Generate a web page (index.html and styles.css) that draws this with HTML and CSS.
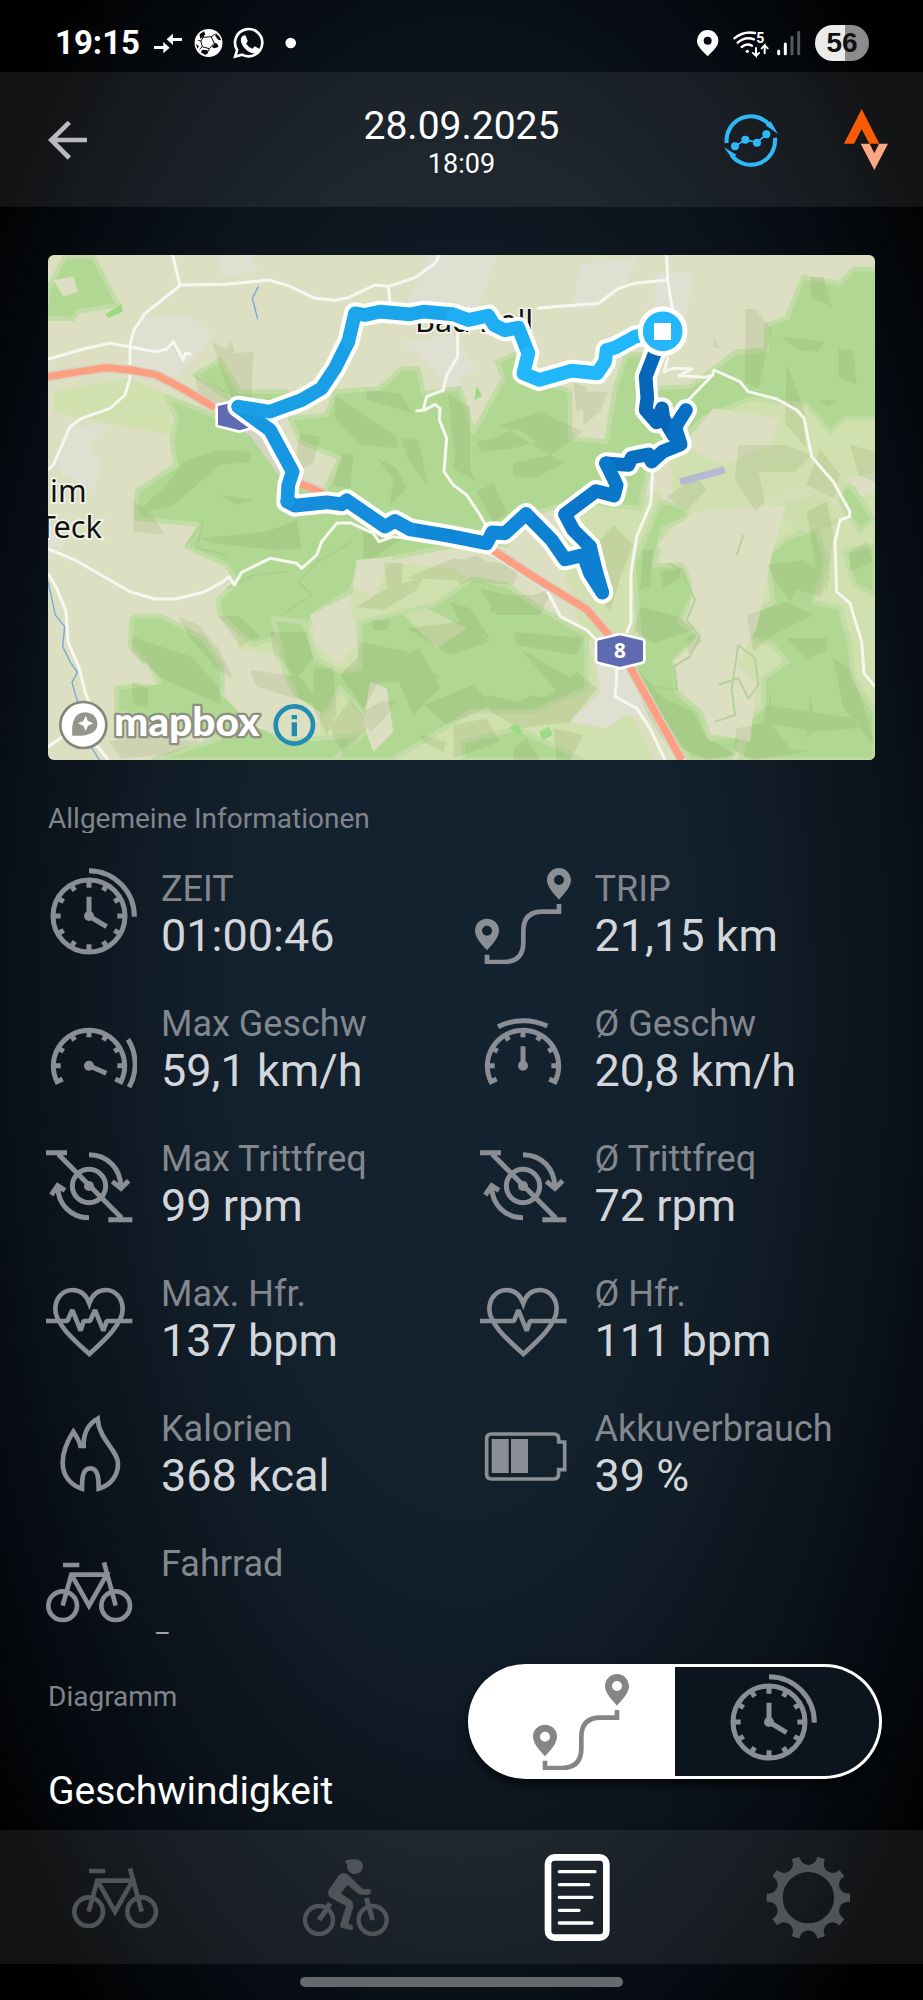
FILE: index.html
```html
<!DOCTYPE html>
<html lang="de">
<head>
<meta charset="utf-8">
<meta name="viewport" content="width=device-width, initial-scale=1">
<title>Tour 28.09.2025</title>
<link rel="stylesheet" href="styles.css">
</head>
<body>
<svg class="sprite" aria-hidden="true">
  <symbol id="i-clock" viewBox="33 235 288 288">
    <g fill="none" stroke="currentColor" stroke-width="15">
      <circle cx="177" cy="379" r="108"/>
      <path d="M177 243A137 137 0 0 1 313 381"/>
      <path d="M177 379V321M177 379L230 411"/>
      <path d="M177 270v24M177 488v-24M68 379h24M286 379h-24M123 285l11 18M231 285l-11 18M83 325l18 11M271 325l-18 11M83 433l18-11M271 433l-18-11M123 473l11-18M231 473l-11-18"/>
    </g>
    <circle cx="177" cy="379" r="15" fill="currentColor"/>
  </symbol>
  <symbol id="i-trip" viewBox="43 235 288 288">
    <path fill="currentColor" fill-rule="evenodd" d="M295 235a36 36 0 0 1 36 37c0 20-22 42-36 58c-14-16-36-38-36-58a36 36 0 0 1 36-37zm0 21a15 15 0 1 0 0 30a15 15 0 0 0 0-30zM79 387a36 36 0 0 1 36 37c0 20-22 42-36 58c-14-16-36-38-36-58a36 36 0 0 1 36-37zm0 21a15 15 0 1 0 0 30a15 15 0 0 0 0-30z"/>
    <path fill="none" stroke="currentColor" stroke-width="14" d="M79 495v22h50q59 0 59-59v-34q0-58 58-58h49v-23"/>
  </symbol>
  <symbol id="i-max" viewBox="33 639 288 288">
    <g fill="none" stroke="currentColor" stroke-width="15">
      <path d="M98 867l-17 8A107 107 0 1 1 273 875l-17-8"/>
      <path d="M177 718v24M68 827h24M286 827h-24M123 733l11 18M231 733l-11 18M83 773l18 11M271 773l-18 11"/>
      <path d="M177 827L229 850M294 748A140 140 0 0 1 297 892"/>
    </g>
    <circle cx="177" cy="827" r="15" fill="currentColor"/>
  </symbol>
  <symbol id="i-avg" viewBox="43 639 288 288">
    <g fill="none" stroke="currentColor" stroke-width="15">
      <path d="M108 867l-17 8A107 107 0 1 1 283 875l-17-8"/>
      <path d="M187 718v24M78 827h24M296 827h-24M133 733l11 18M241 733l-11 18M93 773l18 11M281 773l-18 11"/>
      <path d="M187 827V769M112 710A170 170 0 0 1 260 708"/>
    </g>
    <circle cx="187" cy="827" r="15" fill="currentColor"/>
  </symbol>
  <symbol id="i-crank" viewBox="33 83 288 288">
    <g fill="none" stroke="currentColor" stroke-width="15">
      <path d="M48 127h63M235 328h72M85 132L275 323"/>
      <circle cx="177" cy="227" r="50"/>
      <path d="M177 133C235 133 272 178 272 228M247 213l26 21l23-23"/>
      <path d="M177 322C120 322 84 278 84 232M64 254l19-28l22 14" />
    </g>
    <circle cx="177" cy="227" r="15" fill="currentColor"/>
  </symbol>
  <symbol id="i-heart-max" viewBox="33 487 288 288">
    <g fill="none" stroke="currentColor" stroke-width="14">
      <path d="M178 578C168 551 149 538 127 538C96 538 76 565 76 596C76 640 134 690 178 730C222 690 278 640 278 596C278 565 258 538 228 538C206 538 187 551 178 578z"/>
      <path stroke-linejoin="bevel" d="M48 631h64l15-33l25 62l9-29h19l15-33l25 62l10-29h77"/>
    </g>
  </symbol>
  <symbol id="i-heart" viewBox="43 487 288 288">
    <g fill="none" stroke="currentColor" stroke-width="14">
      <path d="M188 578C178 551 159 538 137 538C106 538 86 565 86 596C86 640 144 690 188 730C232 690 288 640 288 596C288 565 268 538 238 538C216 538 197 551 188 578z"/>
      <path stroke-linejoin="bevel" d="M58 631h102l13-33l25 62l10-29h110"/>
    </g>
  </symbol>
  <symbol id="i-flame" viewBox="33 891 288 288">
    <path fill="none" stroke="currentColor" stroke-width="14" d="M130 962C112 990 98 1018 98 1055C98 1096 124 1124 156 1133C156 1100 158 1072 181 1072C204 1072 206 1100 206 1133C240 1124 264 1096 264 1058C264 1018 206 985 203 923C176 938 160 964 161 1005H151C148 988 138 974 130 962z"/>
  </symbol>
  <symbol id="i-battery" viewBox="43 891 288 288">
    <path fill="none" stroke="currentColor" stroke-width="11" d="M92 969H280q14 0 14 14v10h18v83h-18v11q0 17-14 17H92q-14 0-14-14V983q0-14 14-14z"/>
    <path fill="currentColor" d="M93 984h51v102H93zM151 984h51v102h-51z"/>
  </symbol>
  <symbol id="i-bike" viewBox="123 124 288 288">
    <g fill="none" stroke="currentColor" stroke-width="14">
      <circle cx="188" cy="312" r="43"/><circle cx="347" cy="312" r="43"/>
      <path d="M188 312L214 219H320L267 312L216 222M312 182L347 312M189 190h49"/>
    </g>
  </symbol>
  <symbol id="i-rider" viewBox="894 1043 288 288">
    <g fill="none" stroke="currentColor" stroke-width="13">
      <circle cx="957" cy="1256" r="42"/><circle cx="1118" cy="1256" r="42"/>
      <path stroke-width="15" d="M957 1256L980 1224L990 1206M1118 1256L1099 1190"/>
    </g>
    <path fill="currentColor" d="M1035 1078C1060 1070 1089 1072 1089 1094A24 24 0 0 1 1044 1105C1040 1094 1043 1090 1035 1078zM1018 1120Q1032 1110 1045 1121L1088 1163H1106Q1113 1164 1113 1171T1106 1180H1082Q1074 1178 1068 1172L1043 1151L1022 1176L1053 1197Q1062 1206 1059 1219L1045 1267L1057 1272Q1061 1277 1058 1287L1026 1280Q1019 1278 1021 1269L1038 1214L992 1189Q980 1181 986 1166z"/>
  </symbol>
  <symbol id="i-doc" viewBox="202 624 288 288">
    <rect x="259" y="649" width="175" height="241" rx="20" fill="none" stroke="currentColor" stroke-width="20"/>
    <path fill="none" stroke="currentColor" stroke-width="10" stroke-linecap="round" d="M293 692H400M293 731H381M293 769H391M293 808H352M293 846H391"/>
  </symbol>
  <symbol id="i-gear" viewBox="889 624 288 288">
    <mask id="gear-notches">
      <circle cx="1034" cy="770" r="126" fill="#fff"/>
      <circle cx="1034" cy="770" r="77" fill="#000"/>
      <g fill="#000">
        <circle cx="1153" cy="809" r="27"/><circle cx="1107" cy="871" r="27"/><circle cx="1034" cy="895" r="27"/><circle cx="961" cy="871" r="27"/><circle cx="915" cy="809" r="27"/>
        <circle cx="915" cy="731" r="27"/><circle cx="961" cy="669" r="27"/><circle cx="1034" cy="645" r="27"/><circle cx="1107" cy="669" r="27"/><circle cx="1153" cy="731" r="27"/>
      </g>
    </mask>
    <circle cx="1034" cy="770" r="126" fill="currentColor" mask="url(#gear-notches)"/>
  </symbol>
</svg>

<div class="status">
  <div class="status-side">
    <span class="status-time">19:15</span>
    <svg class="status-left" viewBox="462 75 427 108" aria-hidden="true">
      <path fill="#fff" d="M462 138h28v-12l19 17l-19 17v-13h-28zM546 114h-27v-13l-19 17l19 17v-12h27z"/>
      <circle cx="626" cy="129" r="42" fill="#fff"/>
      <g fill="none" stroke="#05080c" stroke-width="3">
        <path d="M610 112l24-2l9 20l-15 16l-21-6l-4-17zM634 110l12-8M643 130l8 2M628 146l-2 8M607 140l-8 8M603 123l-8-2M610 112l2-12"/>
      </g>
      <path fill="#05080c" d="M599 103l13-9l4 8l-5 9l-10 5zM648 100l11 10l5 11l-9-2l-9-11zM645 131l8 2l3 8l-13 4l-7-4zM607 149l16 2l2 8l-9 6l-13-8zM588 133l9 5l-4 8z"/>
      <path fill="none" stroke="#fff" stroke-width="8" d="M706 170l6-20A41 41 0 1 1 727 164z"/>
      <path fill="#fff" d="M729 107l8-1l7 17l-5 8q8 12 19 15l7-7l16 9q0 10-14 13c-24 0-44-25-44-42q1-9 6-12z"/>
      <circle cx="873" cy="129" r="16" fill="#fff"/>
    </svg>
  </div>
  <div class="status-side">
    <svg class="status-right" viewBox="714 75 312 108" aria-hidden="true">
      <path fill="#fff" fill-rule="evenodd" d="M746 90a32 32 0 0 1 32 33c0 17-19 32-32 46c-13-14-32-29-32-46a32 32 0 0 1 32-33zm0 20a12 12 0 1 0 0 24a12 12 0 0 0 0-24z"/>
      <g fill="none" stroke="#fff" stroke-width="7" stroke-linecap="round">
        <path d="M826 115Q853 92 888 99M836 128Q859 108 885 118M848 141Q863 128 879 137"/>
        <path stroke-width="6" d="M891 144v23l-9-8M891 167l9-8M917 160v-24l-9 9M917 136l9 9"/>
      </g>
      <circle cx="865" cy="154" r="5" fill="#fff"/>
      <text x="892" y="128" class="wifi-gen">5</text>
      <g stroke-width="9" stroke-linecap="round">
        <path stroke="#fff" d="M959 153v8M979 132v29"/>
        <path stroke="#55585c" d="M999 112v49M1019 97v64"/>
      </g>
    </svg>
    <span class="status-battery">56</span>
  </div>
</div>

<header class="topbar">
  <button class="icon-btn" type="button" aria-label="Zurück">
    <svg class="ic-back" viewBox="144 360 120 120" aria-hidden="true"><path fill="none" stroke="#b8babd" stroke-width="14" d="M261 420H156M208 367L154 420L208 474"/></svg>
  </button>
  <div class="topbar-title">
    <h1>28.09.2025</h1>
    <p>18:09</p>
  </div>
  <div class="topbar-actions">
    <button class="icon-btn" type="button" aria-label="Synchronisieren">
      <svg class="ic-sync" viewBox="786 337 162 162" aria-hidden="true">
        <g fill="none" stroke="#2fb9f8" stroke-width="12">
          <path d="M794 427A73 73 0 0 1 925 376M939 411A73 73 0 0 1 808 463"/>
          <path stroke-width="5" d="M819 437L850 417L885 426L913 401"/>
        </g>
        <g fill="#2fb9f8"><path d="M948 400L911 374L926 362zM786 440L823 462L812 476z"/>
        <circle cx="819" cy="437" r="12"/><circle cx="850" cy="417" r="12"/><circle cx="885" cy="426" r="12"/><circle cx="913" cy="401" r="12"/></g>
      </svg>
    </button>
    <button class="icon-btn" type="button" aria-label="Strava">
      <svg class="ic-strava" viewBox="1148 330 132 183" aria-hidden="true">
        <path fill="#fc5b04" d="M1201 330L1254 434H1224L1201 390L1178 434H1148z"/>
        <path fill="#fca785" d="M1198 434H1225L1239 463L1253 434H1280L1239 513z"/>
      </svg>
    </button>
  </div>
</header>

<main class="content">
  <svg class="map" viewBox="24 30 2481 1515" role="img" aria-label="Karte der Route">
    <rect x="24" y="30" width="2481" height="1515" fill="#dcdfc1"/>
    <g fill="#dfe0d2">
      <path d="M528 30h105l22 50l-105 15zM1170 30h200l-70 200l-150 10l-45-75zM300 215l140-5l80 65l-55 60l-60 60l-130-30zM1620 60l170-20l-30 80l-90 70l-70 10zM1850 80l110 5l-30 160l-90-20zM1090 290l150-20l80 130l-60 50zM90 545l110-5l-60 70l45 45l-25 80l-110-60zM24 860l60 30l-60 60z"/>
    </g>
    <g fill="#d0e0af">
      <path d="M40 440l230-40l110 50l20 120l-170-30l-190-40zM1880 440l250-60l390 40v260l-300 60l-160 60l-160-40zM1560 800l300-60l40 120l-60 120l-40 200l-60 100l-120-120zM560 880l340 60l340 30l280 180l180 100l140 295H900l-300-300zM2080 880l430-140v800h-420l-40-200z"/>
    </g>
    <g fill="#b1d893" stroke="#c2dca5" stroke-width="14" stroke-linejoin="round">
      <path d="M10 220L30 120L75 36H160L235 180L110 200L100 222z"/>
      <path d="M380 455L520 510L640 560L735 680L850 745L900 640L780 590L750 520L860 510L885 440L1020 430L1085 370H1135L1150 445L1260 430L1300 560L1325 520L1390 400L1370 350L1440 320L1490 400L1590 440V580L1700 590L1725 430L1760 325L1810 330L1820 430L1950 425L2090 320L2180 315V240L2240 220L2290 96L2400 115L2440 72H2520V520L2420 520L2370 560L2300 480L2130 460L1990 520L1910 600L1830 650L1800 790L1600 770L1500 800L1400 900L1300 890L1100 930L960 960L930 1040L830 1100L800 1150L640 1200L540 1110L535 1065L590 1010L560 960L440 905L480 840L290 820V740L410 660L395 590L410 520z"/>
      <path d="M465 390L540 345L600 440L740 440L700 500L580 470z"/>
      <path d="M275 1120L295 1113H365L490 1180L545 1260L550 1350L660 1430L730 1490L840 1480L1090 1460L1050 1545H340L540 1480L230 1400V1330L360 1310L270 1200z"/>
      <path d="M700 1120L790 1130L830 1240L900 1280L960 1270L960 1130L1180 1080L1300 1000L1400 1020L1500 1090L1640 1170V1330L1480 1400L1290 1400L1150 1490L1050 1545H880L1000 1440L900 1330L860 1400L800 1430L740 1290z"/>
      <path d="M1860 770L1990 795L1870 850L1840 960L1930 960L1960 1050L1920 1130L1980 1170L1900 1250L1910 1340L1980 1400L2010 1480L2110 1470L2070 1545H1950L1850 1400L1790 1290L1750 1270L1800 1170L1780 960z"/>
      <path d="M2000 910L2090 835L2115 895L2010 930z"/>
      <path d="M2180 930L2240 880L2330 850L2360 950L2320 1070L2400 1090L2430 1200L2440 1300L2505 1400V1545H2100L2130 1420L2170 1380V1300L2240 1250L2200 1200L2110 1170L2110 1120L2200 1070z"/>
      <path d="M2410 920l95-20v150l-60-30zM2200 790l150-40l40 80l-110 30zM2380 700l60 30l60 90l-40 40l-50-70zM1270 1490l160-40l200 95h-360z"/>
    </g>
    <g fill="#d1dfb1" opacity=".8">
      <path d="M1900 750l230-150l180 20l110 190l-120 50l-210-60l-110 60zM1560 960l90-10l60 160l-90-20zM2060 1230l40-30l40 90l30 100l-70 20zM1090 1110l70-20l120 60l-90 60zM2380 600l80 50l-60 110l-70-40z"/>
    </g>
    <g fill="#dcdfc1">
      <path d="M40 105l60-10l15 45l-45 15zM1600 415l80 10l30 60l-60 60l-40-20zM1310 490l-60-90l80-30zM1930 600l90-110l200 30l-30 80l-140 60zM1850 900l110-100l280-20l-40 130l-50 240l-60 110l60 60l-20 170l-90-20l-40-100l-70-60l-30-60l70-70l-20-80l10-120zM810 1110l120-60l20 150l-50 60l-70-60zM990 1310l50 20l20 130l-60 60l-30-80zM240 1310l80-60l30 70zM950 945l110-10l-60 120l-60-30zM590 1210l110 20l60 120l80 50v60l-100 20l-110-40l-80-90z"/>
    </g>
    <path fill="#dfe0d2" d="M1665 1230h75l40 60l70 110l-90 10l-60 40l-110-20l90-90z"/>
    <g fill="#6c8443" opacity=".13">
      <path d="M515 290l40 20l20-20l10 35l55-5l-10 230l-60-100zM465 390l80 40l60 70l-130-50zM540 615l90 5v30l-90 10l-140 120l-120 30l100-90l50-70zM490 640l35 10l-35 12zM540 750l100 15l-50 15zM885 450l100 70l80 50l10 40l-110-10l-80-80zM980 435l100 10l40 60l-140-40zM1085 580l50 5l30 140l-60-80zM780 565l60 10l-20 80l-60 30zM905 625l35 5l-10 100l-50-10zM1010 640l60 30l30 60l-50 50l10-80z"/>
      <path d="M480 880l200-20l90-35l15 85l-80 5l-180-20zM280 765l60 50l35 55l-95-10zM275 1175l180 60l80 90l10 55l-180-80l-90-80zM415 1115l60 25l60 70l45 90l-40-20l-90-100zM535 1113h60l65 60l-60 30zM690 1160h110l20 80l-50 60l-70-80zM630 1275l150 20l70 90l-200-60zM820 1270h60l10 140l-30 60l-40-80zM960 1190l140 30l100 80l-260 20zM950 1085l80-50l120-40l-20 40l-100 60zM1030 950l60 5l-10 100l-35-5z"/>
      <path d="M275 1310l50 20v60l-45-10zM205 1490l100-20l170 20l-90 40l-140 10zM995 1125h55l-10 30h-40zM970 1400l50-30l50-5l-40 60l-40 35zM1140 1470l80 20l-10 30l-60-30zM970 860l60-10l60 30l-90 60h-30zM1100 1000l140-60l200 20l-20 60l-200-15z"/>
      <path d="M1225 450l65 35v200l-50-80zM1250 600l60 110l-70-40zM1360 580l-50 10l10 30l100-10l70-20l-60-40zM1420 655l110-25l40 25l-80 40l-70 0zM1600 415l40 10v65l-30 10zM1630 440h75l-25 60l-50 40zM1380 540l120-40l130 60l-100 70zM1310 740l50-25l40 90l-40 30z"/>
      <path d="M2115 192h30l50 60l-40 180l-40-20zM2310 96h40l25 90l-60-30zM2225 275l130 15l-20 30l-60-5zM2395 312l45 5l10 100l-55-20zM2240 355l55 150v100l-60-70zM2020 275l20 35l-20-5zM2335 465h60l-30 20zM2095 600h140l80 30l-50 50l-110 0l20 90l-30 30l-60-100zM2430 600l75 20v90l-50-20zM2340 610l60 80l-20 70l-80-40z"/>
      <path d="M1230 960l80-30l60 40l-110 50zM1320 1030l80 20h80l60-20l-40 80l-130 0zM1350 1070l110 10l-40 30l-70-10zM1230 1070l60 20l60 90l-80-30zM1420 1160l210 20l-20 50l-180-30zM1440 1210l170 100l-60 30zM1340 1350l100 20l90-20l80-70l60 50l-80 100l-150 20l-90-50zM1420 1375l60-25l80 30l-60 30zM1240 1440l100-20l40 70l-140 50zM1420 1510l40-30l40 65h-80zM1540 1450l90 20l-40 75h-40zM1660 910l60-70l60 60l-40 100l-30 100l-60-90z"/>
      <path d="M1800 1085l120 30l40 40l-120 40l-60-40zM1810 915h30l-10 110l-30 10zM1860 980l60-10v30l-50 30zM1790 1270l80 90l90 40l40 80l90 50l-90 15l-130-60l-60-100zM2120 1110l120-40l80 40l-120 60l-60 50zM2180 960l110-15l80 50l-30 60l-130-40zM2210 1010l60 20l-20 40zM2300 1010h60l-20 50zM2180 1380l120 20l150 20v30l-130 10l-150-30zM2090 1450l100-20l60 80l50 10l-160 25l-60-30zM2380 1240l50 30l60 170l10 60l-90-110zM2300 800l60-30l20 100l-20 170l-30-60zM2430 920l50-30l20 60l-70 30z"/>
      <path d="M1880 755l90-60l30 40l-60 60zM2310 1350l20 100l-30 30zM2240 1180h120v40l-60 20zM1940 1180l30-20l15 30l-40 40zM1100 1150l160-20l90 60l-120 40zM1050 1250l90-40l60 120l-80 80zM1150 1380l150-60l60 60l-140 60zM900 1290l60-60l50 90l-40 70zM870 1450l60-90l60 80l-80 90z"/>
    </g>
    <g fill="#9ddb83"><path d="M195 208L245 178L248 200L205 219zM1303 465l7-42l16 30zM1407 1450l30 20l10 -10l-20 -25zM1497 1460l30-15l12 25l-30 15z"/></g>
    <g fill="none" stroke="#a6ca8c" stroke-width="6" opacity=".7">
      <path d="M560 1030l80-40l100-10M725 1110l90-60l-40-40l60-60l100-60M2110 870l-20 60M1885 955l40 20l40 90l-25 60l40 50l-30 60l-50 30l10 70l-70-10M2095 1200l50 40l10 80l-30 40l-30-60l-60 20M2095 1200l-20 130l10 80l-60 20M2190 1350v60l60-20M440 900l50-70l-20 80l90 20"/>
    </g>
    <path d="M1920 711L2054 674" stroke="#b5b9d2" stroke-width="22"/>
    <g fill="none" stroke="#7ba4dc" stroke-width="4"><path d="M655 125l-18 35l16 62M24 1010l22 100l28 35l-6 60l22 45l22 32l-16 30l20 70M150 1500l28 45"/></g>
    <g fill="none" stroke="#f7f7f1" stroke-width="9" stroke-linejoin="round">
      <path d="M398 30L420 122L385 150L315 205L282 255L270 300V400L255 450L210 490L125 520L90 545L40 660L24 675"/>
      <path d="M420 120L560 118L685 105L745 122L825 160L885 166L925 158L1005 120L1045 124L1125 98L1185 55L1198 30M1045 124L1050 175"/>
      <path d="M24 342L130 312L208 295L270 305L345 320L380 312L400 290L430 345L436 325L454 328"/>
      <path d="M24 912L105 945L270 1040L345 1062H405L490 1042L550 1010L567 995L583 1020L605 982L690 940L770 955L785 970L830 930L845 890L890 835L930 833L1000 865L1017 890L1060 875L1150 885L1230 880L1360 930L1520 1035L1562 1115L1640 1155L1680 1195L1728 1240L1730 1300L1725 1355L1790 1390L1830 1450L1875 1545"/>
      <path d="M24 985L50 1030L78 1100L84 1190L118 1270L135 1340L150 1380L120 1440L24 1505M120 1440L205 1545"/>
      <path d="M1253 260V335L1220 390L1210 435L1160 455L1150 495L1130 498L1155 495L1185 478L1200 490L1198 525L1220 580L1212 680L1240 720L1280 750L1320 810L1345 855"/>
      <path d="M1880 30L1883 105L1900 210M1883 105L1785 115L1735 130L1675 175L1490 190M1885 335L1872 380L1900 370L1955 372L1918 392L1995 397L2018 390L2022 375L2100 410L2125 440L2210 462L2270 495L2292 520L2315 635L2380 710L2430 800L2428 815L2400 825L2385 890L2390 1040L2430 1075L2465 1190L2472 1285L2505 1325"/>
      <path d="M2018 390L1945 465M1838 680L1832 775L1790 875L1773 985V1130L1760 1165"/>
    </g>
    <g fill="none" stroke-linejoin="round">
      <path stroke="#d5d3c4" stroke-width="30" d="M24 395L130 378L200 368L280 376L350 390L430 432L525 488L640 560L730 685L850 745M1340 900L1480 995L1640 1093L1740 1210L1800 1320L1925 1545"/>
      <path stroke="#ff9f82" stroke-width="22" d="M24 395L130 378L200 368L280 376L350 390L430 432L525 488M780 715L850 745M1350 910L1480 995L1640 1093L1740 1210L1800 1320L1925 1545"/>
    </g>
    <g class="map-label">
      <text x="30" y="770">im</text>
      <text x="-4" y="880">Teck</text>
      <text x="1125" y="262">Bad Boll</text>
    </g>
    <g fill="#5f6ab1" stroke="#fff" stroke-width="8" stroke-linejoin="round">
      <path d="M530 480L598 464L668 480V540L598 560L530 543z"/>
      <path d="M1668 1190Q1668 1184 1676 1182L1740 1167L1805 1182Q1813 1184 1813 1190V1245Q1813 1252 1805 1254L1740 1270L1676 1254Q1668 1252 1668 1245z"/>
    </g>
    <text class="shield" x="1740" y="1240">8</text>
    <g fill="none" stroke-linejoin="round" stroke-linecap="round">
      <path stroke="#fff" stroke-width="66" d="M1868 259L1846 320L1817 395L1822 460L1817 495L1850 532L1866 490L1870 520L1900 570L1910 540L1938 495L1905 545L1922 598L1868 620L1835 650L1825 628L1775 638L1765 660L1698 655L1730 720L1722 752L1668 738L1575 808L1600 855L1650 905L1670 985L1687 1043L1650 985L1630 930L1575 943L1535 885L1458 807L1395 865L1357 862L1340 895L1230 873L1110 853L1065 828L1035 845L920 766L905 778L860 772L765 782L742 770L745 720L758 680L690 555L595 485L690 500L785 465L845 430L885 370L925 290L945 205L975 210L1020 200L1110 208L1150 200L1240 208L1285 225L1345 212L1362 240L1395 256L1435 248L1465 325L1450 385L1498 405L1595 377L1672 385L1695 350L1700 315L1725 308L1785 275L1868 259"/>
      <g stroke-width="41">
        <path stroke="#0666b9" d="M1868 259L1846 320L1817 395L1822 460L1817 495L1850 532L1866 490L1870 520L1900 570"/>
        <path stroke="#0870c3" d="M1900 570L1910 540L1938 495L1905 545L1922 598L1868 620L1835 650L1825 628L1775 638L1765 660L1698 655"/>
        <path stroke="#0b77ca" d="M1698 655L1730 720L1722 752L1668 738L1575 808L1600 855L1650 905"/>
        <path stroke="#0d80d1" d="M1650 905L1670 985L1687 1043L1650 985L1630 930L1575 943L1535 885L1458 807"/>
        <path stroke="#1087d8" d="M1458 807L1395 865L1357 862L1340 895L1230 873L1110 853"/>
        <path stroke="#148edc" d="M1110 853L1065 828L1035 845L920 766L905 778L860 772L765 782L742 770"/>
        <path stroke="#1797e1" d="M742 770L745 720L758 680L690 555L595 485"/>
        <path stroke="#1a9fe7" d="M595 485L690 500L785 465L845 430L885 370L925 290"/>
        <path stroke="#1ba6ec" d="M925 290L945 205L975 210L1020 200L1110 208L1150 200L1240 208"/>
        <path stroke="#1eaef3" d="M1240 208L1285 225L1345 212L1362 240L1395 256L1435 248L1465 325"/>
        <path stroke="#22b7fa" d="M1465 325L1450 385L1498 405L1595 377L1672 385L1695 350L1700 315L1725 308L1785 275L1868 259"/>
      </g>
    </g>
    <circle cx="1868" cy="259" r="67" fill="#25b7fb" stroke="#fff" stroke-width="15"/>
    <rect x="1842" y="234" width="51" height="51" fill="#fff"/>
    <circle cx="130" cy="1440" r="69" fill="#fff" stroke="#85877a" stroke-width="8"/>
    <path fill="#94968d" d="M97 1472C93 1430 105 1402 135 1402C158 1402 172 1418 172 1437C172 1466 140 1475 97 1472z"/>
    <path fill="#fff" d="M137 1412l7 16l16 7l-16 7l-7 16l-7-16l-16-7l16-7z"/>
    <text class="mapbox" x="222" y="1473">mapbox</text>
    <circle cx="763" cy="1440" r="56" fill="none" stroke="#228cb2" stroke-width="14"/>
    <path fill="#228cb2" d="M755 1410h16v13h-16zM755 1432h16v42h-16z"/>
  </svg>

  <h2 class="section-title">Allgemeine Informationen</h2>
  <dl class="stats">
    <div class="stat"><svg class="icon" aria-hidden="true"><use href="#i-clock"/></svg><div class="stat-text"><dt>ZEIT</dt><dd>01:00:46</dd></div></div>
    <div class="stat"><svg class="icon" aria-hidden="true"><use href="#i-trip"/></svg><div class="stat-text"><dt>TRIP</dt><dd>21,15 km</dd></div></div>
    <div class="stat"><svg class="icon" aria-hidden="true"><use href="#i-max"/></svg><div class="stat-text"><dt>Max Geschw</dt><dd>59,1 km/h</dd></div></div>
    <div class="stat"><svg class="icon" aria-hidden="true"><use href="#i-avg"/></svg><div class="stat-text"><dt>Ø Geschw</dt><dd>20,8 km/h</dd></div></div>
    <div class="stat"><svg class="icon" aria-hidden="true"><use href="#i-crank"/></svg><div class="stat-text"><dt>Max Trittfreq</dt><dd>99 rpm</dd></div></div>
    <div class="stat"><svg class="icon" aria-hidden="true"><use href="#i-crank"/></svg><div class="stat-text"><dt>Ø Trittfreq</dt><dd>72 rpm</dd></div></div>
    <div class="stat"><svg class="icon" aria-hidden="true"><use href="#i-heart-max"/></svg><div class="stat-text"><dt>Max. Hfr.</dt><dd>137 bpm</dd></div></div>
    <div class="stat"><svg class="icon" aria-hidden="true"><use href="#i-heart"/></svg><div class="stat-text"><dt>Ø Hfr.</dt><dd>111 bpm</dd></div></div>
    <div class="stat"><svg class="icon" aria-hidden="true"><use href="#i-flame"/></svg><div class="stat-text"><dt>Kalorien</dt><dd>368 kcal</dd></div></div>
    <div class="stat"><svg class="icon" aria-hidden="true"><use href="#i-battery"/></svg><div class="stat-text"><dt>Akkuverbrauch</dt><dd>39 %</dd></div></div>
    <div class="stat"><svg class="icon" aria-hidden="true"><use href="#i-bike"/></svg><div class="stat-text"><dt>Fahrrad</dt><dd class="stat-note">_</dd></div></div>
  </dl>

  <section class="chart-head">
    <div class="chart-titles">
      <h2 class="section-title">Diagramm</h2>
      <h3 class="chart-name">Geschwindigkeit</h3>
    </div>
    <div class="toggle" role="group" aria-label="Achse">
      <button class="toggle-btn is-on" type="button" aria-pressed="true" aria-label="Strecke"><svg class="icon" aria-hidden="true"><use href="#i-trip"/></svg></button>
      <button class="toggle-btn" type="button" aria-pressed="false" aria-label="Zeit"><svg class="icon" aria-hidden="true"><use href="#i-clock"/></svg></button>
    </div>
  </section>
</main>

<nav class="tabs" aria-label="Hauptnavigation">
  <a class="tab" href="#bike" aria-label="Fahrrad"><svg class="icon" aria-hidden="true"><use href="#i-bike"/></svg></a>
  <a class="tab" href="#ride" aria-label="Fahren"><svg class="icon" aria-hidden="true"><use href="#i-rider"/></svg></a>
  <a class="tab is-active" href="#log" aria-label="Touren" aria-current="page"><svg class="icon" aria-hidden="true"><use href="#i-doc"/></svg></a>
  <a class="tab" href="#settings" aria-label="Einstellungen"><svg class="icon" aria-hidden="true"><use href="#i-gear"/></svg></a>
</nav>
<div class="home"><span class="home-bar"></span></div>
</body>
</html>
```

FILE: styles.css
```css
* { box-sizing: border-box; }

body {
  margin: 0;
  min-height: 100vh;
  display: flex;
  flex-direction: column;
  font-family: Roboto, "Liberation Sans", sans-serif;
  color: #fff;
  background: #000 radial-gradient(ellipse 66% 66% at 50% 50%, #142330 0%, #13212d 38%, #0d161f 64%, #070c12 82%, #000 100%);
}

h1, h2, h3, p, dl, dd { margin: 0; font-weight: 400; }
button { padding: 0; border: 0; background: none; color: inherit; cursor: pointer; }
svg { display: block; }
.sprite { position: absolute; width: 0; height: 0; }

.status {
  display: flex;
  justify-content: space-between;
  align-items: center;
  height: 72px;
  padding: 14px 54px 0 55px;
}
.status-side { display: flex; align-items: center; gap: 14px; }
.status-time { font-size: 33px; line-height: 36px; font-weight: 700; }
.status-left { width: 142px; height: 36px; }
.status-right { width: 104px; height: 36px; }
.wifi-gen { font: 700 42px Roboto, sans-serif; fill: #fff; }
.status-battery {
  width: 54px;
  border-radius: 18px;
  background: linear-gradient(90deg, #ebebeb 56%, #8c8c8c 56%);
  color: #111;
  font: 700 28px/36px "Liberation Sans", sans-serif;
  text-align: center;
}

.topbar {
  display: grid;
  grid-template-columns: 1fr auto 1fr;
  align-items: center;
  height: 135px;
  padding: 0 35px 0 48px;
  background: rgba(255, 255, 255, 0.07);
}
.topbar-title { text-align: center; padding-top: 4px; margin-left: -13px; }
.topbar-title h1 { font-size: 39px; line-height: 44px; }
.topbar-title p { font-size: 27px; line-height: 32px; }
.topbar-actions { display: flex; justify-content: flex-end; align-items: center; gap: 66px; }
.icon-btn { justify-self: start; }
.ic-back { width: 40px; height: 40px; }
.ic-sync { width: 54px; height: 54px; }
.ic-strava { width: 44px; height: 61px; }

.content { flex: 1; padding: 48px 41px 0; }
.map {
  width: calc(100% - 14px);
  margin: 0 7px;
  border-radius: 6px;
  overflow: hidden;
}
.map-label {
  font: 400 92px "Noto Sans", sans-serif;
  fill: #111;
  stroke: #f3f3ea;
  stroke-width: 10px;
  paint-order: stroke;
}
.shield { font: 700 62px "Noto Sans", sans-serif; fill: #fff; text-anchor: middle; }
.mapbox {
  font: 900 122px Lato, sans-serif;
  fill: #fff;
  stroke: #8d8f80;
  stroke-width: 14px;
  stroke-linejoin: round;
  paint-order: stroke;
}

.section-title {
  margin: 45px 7px 0;
  font-size: 28px;
  line-height: 28px;
  overflow: hidden;
  color: #80858c;
}

.stats {
  display: grid;
  grid-template-columns: 1fr 1fr;
  gap: 39px 26px;
  margin-top: 35px;
}
.stat { display: flex; gap: 24px; height: 96px; }
.icon { width: 96px; height: 96px; flex: none; color: #8a8e95; }
.stat dt { font-size: 36px; line-height: 42px; color: #83888f; white-space: nowrap; }
.stat dd { font-size: 45px; line-height: 52px; color: #d3d6db; white-space: nowrap; }
.stat .stat-note { margin: 24px 0 0 -5px; font-size: 28px; line-height: 28px; color: #a3a7ad; }

.chart-head { display: flex; justify-content: space-between; align-items: flex-start; margin-top: 25px; }
.chart-titles { padding: 19px 7px 0; }
.chart-titles .section-title { margin: 0; }
.chart-name { margin-top: 58px; font-size: 39px; line-height: 44px; }
.toggle {
  display: flex;
  width: 414px;
  height: 115px;
  padding: 3px;
  border-radius: 58px;
  background: #fff;
  box-shadow: 0 6px 10px rgba(0, 0, 0, 0.6);
}
.toggle-btn {
  flex: 1;
  display: flex;
  align-items: center;
  justify-content: center;
  padding-right: 16px;
  border-radius: 0 55px 55px 0;
  background: #0c151e;
}
.toggle-btn.is-on { padding: 0 0 0 16px; border-radius: 55px 0 0 55px; background: #fff; }
.toggle-btn.is-on .icon { color: #858585; }

.tabs {
  display: grid;
  grid-template-columns: repeat(4, 1fr);
  height: 134px;
  background: rgba(255, 255, 255, 0.07);
}
.tab { display: flex; align-items: center; justify-content: center; }
.tab .icon { color: #505458; }
.tab.is-active .icon { color: #fff; }

.home { display: flex; justify-content: center; align-items: center; height: 36px; }
.home-bar { width: 35%; height: 10px; border-radius: 5px; background: #66696e; }
```
